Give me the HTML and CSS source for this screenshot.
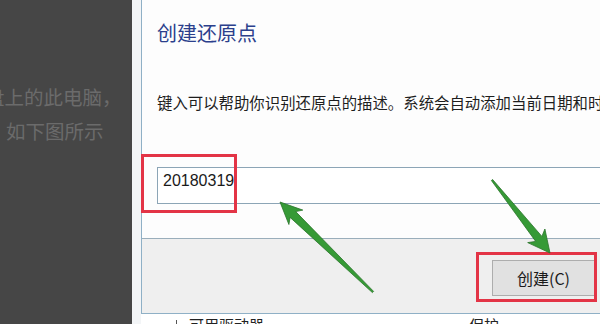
FILE: index.html
```html
<!DOCTYPE html>
<html lang="zh-CN">
<head>
<meta charset="utf-8">
<title>创建还原点</title>
<link rel="stylesheet" href="styles.css">
</head>
<body>
<div class="page">
  <aside class="side">
    <p class="line l1">盘上的此电脑，</p>
    <p class="line l2">如下图所示</p>
  </aside>
  <div class="gap"></div>
  <main class="main">
    <section class="dialog">
      <div class="body">
        <h1 class="title">创建还原点</h1>
        <p class="desc">键入可以帮助你识别还原点的描述。系统会自动添加当前日期和时间。</p>
        <div class="input"><span class="value">20180319</span><i class="caret"></i></div>
      </div>
      <div class="footer"><button class="btn" type="button">创建(C)</button></div>
    </section>
    <div class="below">
      <span class="tick"></span>
      <span class="col1">可用驱动器</span>
      <span class="col2">保护</span>
    </div>
  </main>
  <svg class="overlay" width="600" height="324" viewBox="0 0 600 324" xmlns="http://www.w3.org/2000/svg">
    <rect x="142.5" y="155.5" width="93" height="56" fill="none" stroke="#e33446" stroke-width="3"/>
    <rect x="477.5" y="253.5" width="118" height="47" fill="none" stroke="#e33446" stroke-width="3"/>
    <polygon points="280,202 302.8,210.1 295.7,211.6 373.6,291.4 372.4,292.6 290.1,217.4 288.9,224.5" fill="#369a36" stroke="#2a742a" stroke-width="0.8" stroke-linejoin="round"/>
    <polygon points="550,253 527.7,242.6 535.7,241.4 491.4,180.5 492.6,179.5 541.9,236.4 544.9,229" fill="#369a36" stroke="#2a742a" stroke-width="0.8" stroke-linejoin="round"/>
  </svg>
</div>
</body>
</html>
```
FILE: styles.css
```css
* { box-sizing: border-box; }
html, body { margin: 0; padding: 0; }
body {
  width: 600px;
  height: 324px;
  overflow: hidden;
  font-family: "Noto Sans CJK SC", "Noto Sans", sans-serif;
  background: #ffffff;
}
.page {
  position: relative;
  display: flex;
  width: 600px;
  height: 324px;
  overflow: hidden;
}
.side {
  width: 132px;
  flex: none;
  background: #464646;
  padding-top: 80px;
  overflow: hidden;
}
.line {
  margin: 0;
  white-space: nowrap;
  font-size: 19.5px;
  line-height: 34px;
  color: #6b6b6b;
}
.l1 { margin-left: -15px; }
.l2 { margin-left: 6px; }
.gap {
  width: 9px;
  flex: none;
  background: #f3f5f7;
}
.main {
  flex: 1;
  min-width: 0;
  display: flex;
  flex-direction: column;
  background: #ffffff;
}
.dialog {
  border-left: 1px solid #8fb0c6;
  border-bottom: 1px solid #8fb0c6;
  background: #fdfdfd;
}
.body {
  height: 238px;
  padding: 19px 0 0 15px;
  overflow: hidden;
}
.title {
  margin: 0;
  font-size: 20px;
  line-height: 28px;
  font-weight: normal;
  color: #2b3f8c;
  white-space: nowrap;
}
.desc {
  margin: 44px 0 0;
  font-size: 15.4px;
  line-height: 22px;
  color: #1e1e1e;
  white-space: nowrap;
}
.input {
  margin-top: 54px;
  height: 37px;
  border: 1px solid #8ca5b6;
  border-right: none;
  background: #ffffff;
  display: flex;
  align-items: flex-start;
  padding: 3px 0 0 5px;
}
.value {
  font-family: "Liberation Sans", Arial, sans-serif;
  font-size: 16px;
  line-height: 20px;
  color: #1a1a1a;
}
.caret {
  display: block;
  width: 1px;
  height: 19px;
  margin-top: 1px;
  background: #000000;
}
.footer {
  height: 75px;
  border-top: 1px solid #9aaebb;
  background: #efefef;
  display: flex;
  justify-content: flex-end;
  align-items: flex-start;
  padding: 21px 5px 0 0;
}
.btn {
  width: 103px;
  height: 36px;
  margin: 0;
  padding: 0;
  border: 1px solid #adadad;
  background: #e1e1e1;
  font-family: "Noto Sans CJK SC", sans-serif;
  font-size: 16px;
  color: #1a1a1a;
}
.below {
  display: flex;
  align-items: flex-start;
  height: 10px;
  overflow: hidden;
  font-size: 15px;
  line-height: 20px;
  color: #222222;
  padding-top: 1px;
}
.tick {
  width: 1px;
  height: 20px;
  margin: 5px 0 0 35px;
  background: #555555;
}
.col1 { margin-left: 12px; }
.col2 { margin-left: 205px; }
.overlay {
  position: absolute;
  left: 0;
  top: 0;
  pointer-events: none;
}
```
